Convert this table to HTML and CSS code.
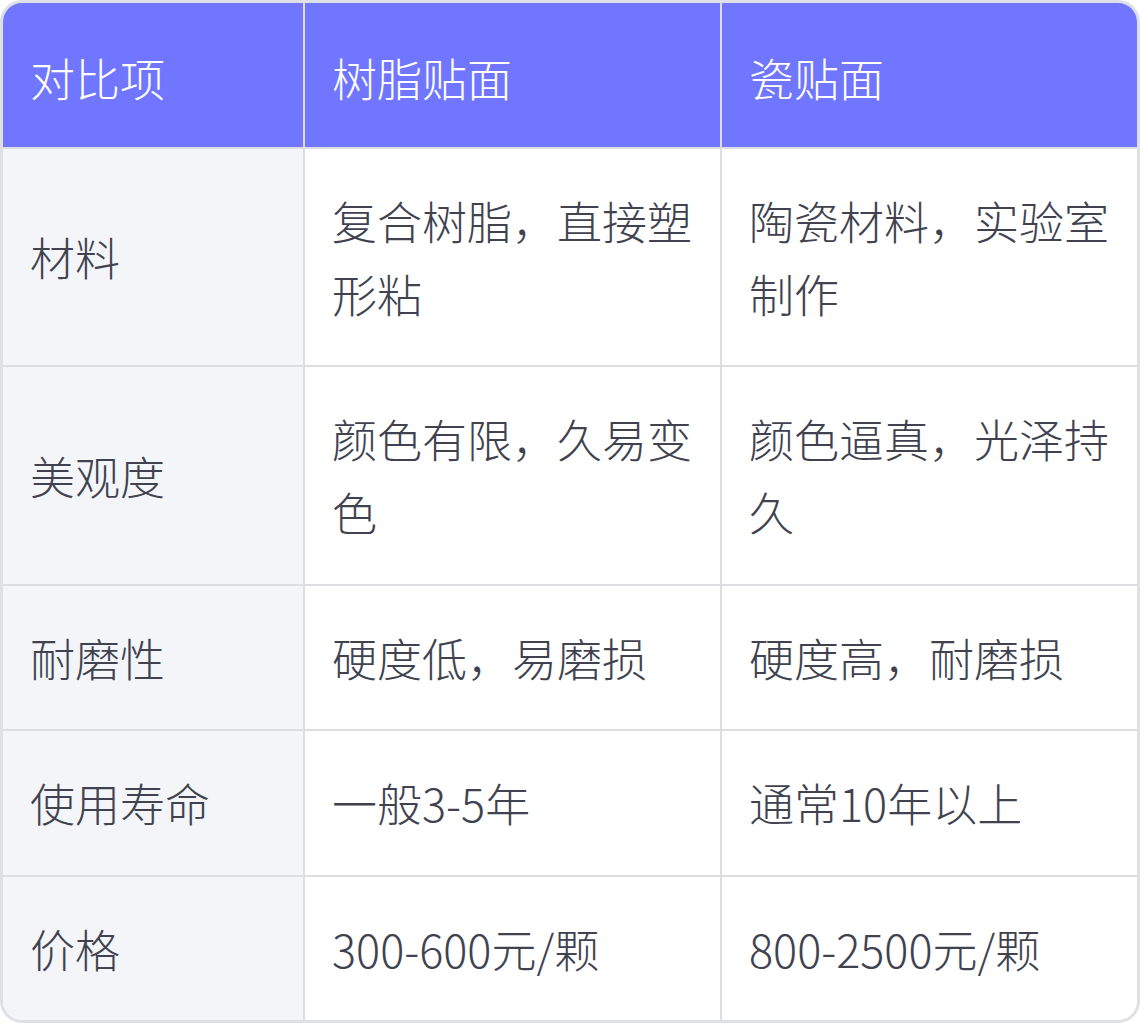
FILE: index.html
```html
<!DOCTYPE html>
<html lang="zh-CN">
<head>
<meta charset="utf-8">
<link rel="stylesheet" href="styles.css">
</head>
<body>
<div class="card">
  <div class="grid">
    <div class="cell head">对比项</div>
    <div class="cell head">树脂贴面</div>
    <div class="cell head">瓷贴面</div>

    <div class="cell label">材料</div>
    <div class="cell">复合树脂，直接塑形粘</div>
    <div class="cell">陶瓷材料，实验室制作</div>

    <div class="cell label">美观度</div>
    <div class="cell">颜色有限，久易变色</div>
    <div class="cell">颜色逼真，光泽持久</div>

    <div class="cell label">耐磨性</div>
    <div class="cell">硬度低，易磨损</div>
    <div class="cell">硬度高，耐磨损</div>

    <div class="cell label">使用寿命</div>
    <div class="cell">一般3-5年</div>
    <div class="cell">通常10年以上</div>

    <div class="cell label">价格</div>
    <div class="cell">300-600元/颗</div>
    <div class="cell">800-2500元/颗</div>
  </div>
</div>
</body>
</html>
```

FILE: styles.css
```css
html, body {
  margin: 0;
  padding: 0;
  background: #ffffff;
}

.card {
  width: 1140px;
  box-sizing: border-box;
  border: 3px solid #dfe0e5;
  border-radius: 22px;
  overflow: hidden;
  font-family: "Noto Sans CJK SC", "Noto Sans", sans-serif;
  font-weight: 300;
}

.grid {
  display: grid;
  grid-template-columns: 300px 415px 415px;
  gap: 2px;
  background: #dddee3;
}

.cell {
  background: #ffffff;
  color: #40434f;
  font-size: 45px;
  line-height: 73px;
  padding: 35px 27px 35.5px 27px;
  display: flex;
  align-items: center;
}

.cell.head {
  background: #7076ff;
  color: #ffffff;
  padding-top: 38px;
  padding-bottom: 32.5px;
}

.cell.label {
  background: #f4f5f9;
}
```
